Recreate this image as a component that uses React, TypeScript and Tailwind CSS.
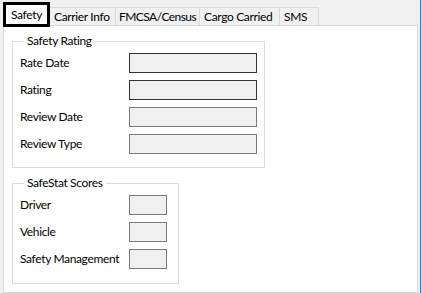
import React from "react";

const font = { fontFamily: 'Lato, "Noto Sans", Arial, sans-serif' };

function Field({ label, w, dark }: { label: string; w: string; dark?: boolean }) {
  return (
    <div className="flex items-center h-[20px]">
      <div className="w-[109px] shrink-0 whitespace-nowrap text-[12px] leading-[16px] tracking-[-0.35px] text-black">{label}</div>
      <div
        className={`${w} shrink-0 h-[20px] bg-[#f0f0f0] border ${dark ? "border-[#333333]" : "border-[#7a7a7a]"}`}
      />
    </div>
  );
}

export default function App() {
  const tabs: [string, string][] = [
    ["Carrier Info", "w-[66px] pl-[4px]"],
    ["FMCSA/Census", "w-[84px] pl-[3px] tracking-[-0.55px]"],
    ["Cargo Carried", "w-[80px] pl-[4px]"],
    ["SMS", "w-[39px] pl-[4px]"],
  ];
  return (
    <div className="w-[421px] h-[293px] overflow-hidden bg-[#f0f0f0] flex text-black tracking-[-0.35px]" style={font}>
      <div className="flex-1 flex flex-col pl-[3px] pr-[2px]">
        <div className="h-[25px] flex items-end relative z-10">
          <div className="w-[47px] h-[25px] mb-[-2px] border-[3px] border-black bg-white flex items-start justify-center pt-[2px] text-[12px] leading-[16px] whitespace-nowrap">
            Safety
          </div>
          {tabs.map(([t, w]) => (
            <div
              key={t}
              className={`${w} h-[18px] border border-b-0 border-l-0 border-[#d9d9d9] bg-[#f0f0f0] text-[12px] leading-[16px] flex items-center whitespace-nowrap overflow-hidden`}
            >
              {t}
            </div>
          ))}
        </div>
        <div className="flex-1 bg-white border border-[#d9d9d9] pl-[8px] pt-[7px] flex flex-col gap-[7px]">
          <fieldset className="w-[252px] h-[135px] border border-[#dcdcdc] px-[7px] pb-[12px]">
            <legend className="ml-[4px] px-[3px] text-[12px] leading-[16px]">Safety Rating</legend>
            <div className="flex flex-col gap-[7px] pt-[4px]">
              <Field label="Rate Date" w="w-[128px]" dark />
              <Field label="Rating" w="w-[128px]" dark />
              <Field label="Review Date" w="w-[128px]" />
              <Field label="Review Type" w="w-[128px]" />
            </div>
          </fieldset>
          <fieldset className="w-[167px] h-[109px] border border-[#dcdcdc] px-[7px] pb-[12px]">
            <legend className="ml-[4px] px-[3px] text-[12px] leading-[16px]">SafeStat Scores</legend>
            <div className="flex flex-col gap-[7px] pt-[4px]">
              <Field label="Driver" w="w-[38px]" />
              <Field label="Vehicle" w="w-[38px]" />
              <Field label="Safety Management" w="w-[38px]" />
            </div>
          </fieldset>
        </div>
      </div>
      <div className="w-[1px] bg-[#1883d7]" />
    </div>
  );
}
